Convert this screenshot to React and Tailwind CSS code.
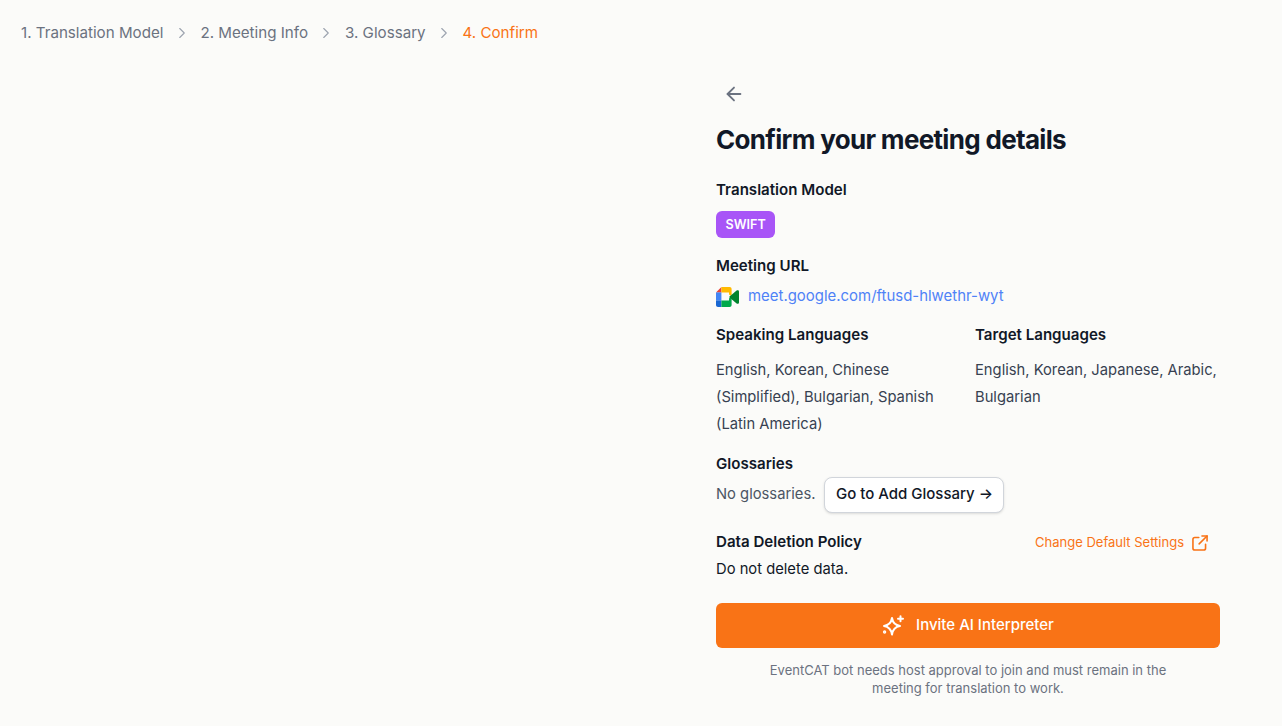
import React from "react";
import { ArrowLeft, ChevronRight } from "lucide-react";

function MeetIcon() {
  return (
    <svg className="mt-[2px]" width="23" height="20" viewBox="0 0 23 20" fill="none">
      <path d="M5.4 0L0 5.4H5.4Z" fill="#ea4335" />
      <path d="M5.4 0H13.6C14.8 0 15.6 0.9 15.6 2V9.2L13 7.4V5.4H5.4Z" fill="#ffba00" />
      <path d="M0 5.4H5.4V13.6H0Z" fill="#4285f4" />
      <path d="M0 13.6H5.4V20H2C0.9 20 0 19.1 0 18Z" fill="#1967d2" />
      <path d="M5.4 13.6H13V11.4L15.6 9.2V18C15.6 19.1 14.8 20 13.6 20H5.4Z" fill="#00a94b" />
      <path d="M13 10L15.6 7.8L20.6 3.6C21.6 2.8 23 3.3 23 4.6V15.4C23 16.7 21.6 17.2 20.6 16.4L15.6 12.2L13 10Z" fill="#00832d" />
    </svg>
  );
}

function ExternalIcon() {
  return (
    <svg width="16" height="16" viewBox="0 0 17 17" fill="none" stroke="currentColor" strokeWidth="1.7" strokeLinecap="round" strokeLinejoin="round">
      <path d="M7.2 2.6H3C1.9 2.6 1 3.5 1 4.6V14C1 15.1 1.9 16 3 16H12.4C13.5 16 14.4 15.1 14.4 14V9.8" />
      <path d="M10.6 1H16V6.4" />
      <path d="M16 1L7.6 9.4" />
    </svg>
  );
}

function SparkIcon() {
  return (
    <svg width="22" height="21" viewBox="0 0 22 21" fill="none" stroke="currentColor" strokeWidth="2" strokeLinecap="round" strokeLinejoin="round">
      <path d="M10 3C10.8 8 13 10.2 18 11C13 11.8 10.8 14 10 19.5C9.2 14 7 11.8 2 11C7 10.2 9.2 8 10 3Z" />
      <path d="M18.5 1.2V6.2M16 3.7H21" />
      <circle cx="2.6" cy="17" r="0.7" />
    </svg>
  );
}

function Step({ children, active }) {
  return <span className={active ? "text-[#f97316]" : "text-[#6b7280]"}>{children}</span>;
}

function Chevron() {
  return <ChevronRight className="w-[18px] h-[18px] text-[#9ca3af] mx-[9.5px]" strokeWidth={1.5} />;
}

function Label({ children }) {
  return <div className="text-[15.1px] leading-[22px] font-semibold text-[#111827]">{children}</div>;
}

export default function App() {
  return (
    <div className="min-h-[726px] bg-[#fbfbf9] font-['Inter',sans-serif] text-[#111827] overflow-hidden">
      <nav className="flex items-center h-[66px] pl-[21px] text-[15.15px]">
        <Step>1. Translation Model</Step>
        <Chevron />
        <Step>2. Meeting Info</Step>
        <Chevron />
        <Step>3. Glossary</Step>
        <Chevron />
        <Step active>4. Confirm</Step>
      </nav>
      <main className="flex justify-end pr-[62px] mt-[10px]">
        <section className="w-[504px]">
          <button className="w-9 h-9 flex items-center justify-center rounded-md text-[#6b7280]">
            <ArrowLeft className="w-[22px] h-[22px]" strokeWidth={2} />
          </button>
          <h1 className="text-[26px] leading-[32px] font-bold tracking-[-0.68px] text-[#111827] mt-3">Confirm your meeting details</h1>
          <div className="mt-[23px]"><Label>Translation Model</Label></div>
          <span className="inline-flex items-center h-[27px] mt-[10px] pt-[2px] px-[9.5px] rounded-md bg-[#a855f7] text-white text-[12.6px] font-semibold">SWIFT</span>
          <div className="mt-[17px]"><Label>Meeting URL</Label></div>
          <div className="flex items-center gap-[9px] mt-[8px] h-[22px]">
            <MeetIcon />
            <a className="text-[14.95px] text-[#4f82f7]">meet.google.com/ftusd-hlwethr-wyt</a>
          </div>
          <div className="grid grid-cols-[259px_1fr] mt-[17px]">
            <div className="pr-2">
              <Label>Speaking Languages</Label>
              <p className="mt-[11px] text-[14.75px] leading-[27px] text-[#374151]">English, Korean, Chinese (Simplified), Bulgarian, Spanish (Latin America)</p>
            </div>
            <div>
              <Label>Target Languages</Label>
              <p className="mt-[11px] text-[14.75px] leading-[27px] text-[#374151]">English, Korean, Japanese, Arabic, Bulgarian</p>
            </div>
          </div>
          <div className="mt-[15px]"><Label>Glossaries</Label></div>
          <div className="flex items-center gap-[9px] mt-[2px]">
            <span className="text-[14.75px] mb-[2px] text-[#4b5563]">No glossaries.</span>
            <button className="h-9 px-[10.5px] pb-[2px] bg-white border border-[#d1d5db] rounded-lg shadow-sm text-[15px] font-medium text-[#111827]">Go to Add Glossary →</button>
          </div>
          <div className="flex items-center justify-between mt-[18px] pr-[12px]">
            <Label>Data Deletion Policy</Label>
            <a className="flex items-center gap-2 text-[13px] pt-[2px] text-[#f97316]">
              Change Default Settings
              <ExternalIcon />
            </a>
          </div>
          <div className="text-[14.75px] leading-[22px] mt-[5px] text-[#111827]">Do not delete data.</div>
          <button className="w-full h-[45px] mt-[23px] flex items-center justify-center gap-[12px] rounded-md bg-[#f97316] text-white text-[15px] font-medium">
            <SparkIcon />
            Invite AI Interpreter
          </button>
          <p className="mt-[13px] text-center text-[13px] leading-[18px] text-[#6b7280]">
            EventCAT bot needs host approval to join and must remain in the<br />meeting for translation to work.
          </p>
        </section>
      </main>
    </div>
  );
}
